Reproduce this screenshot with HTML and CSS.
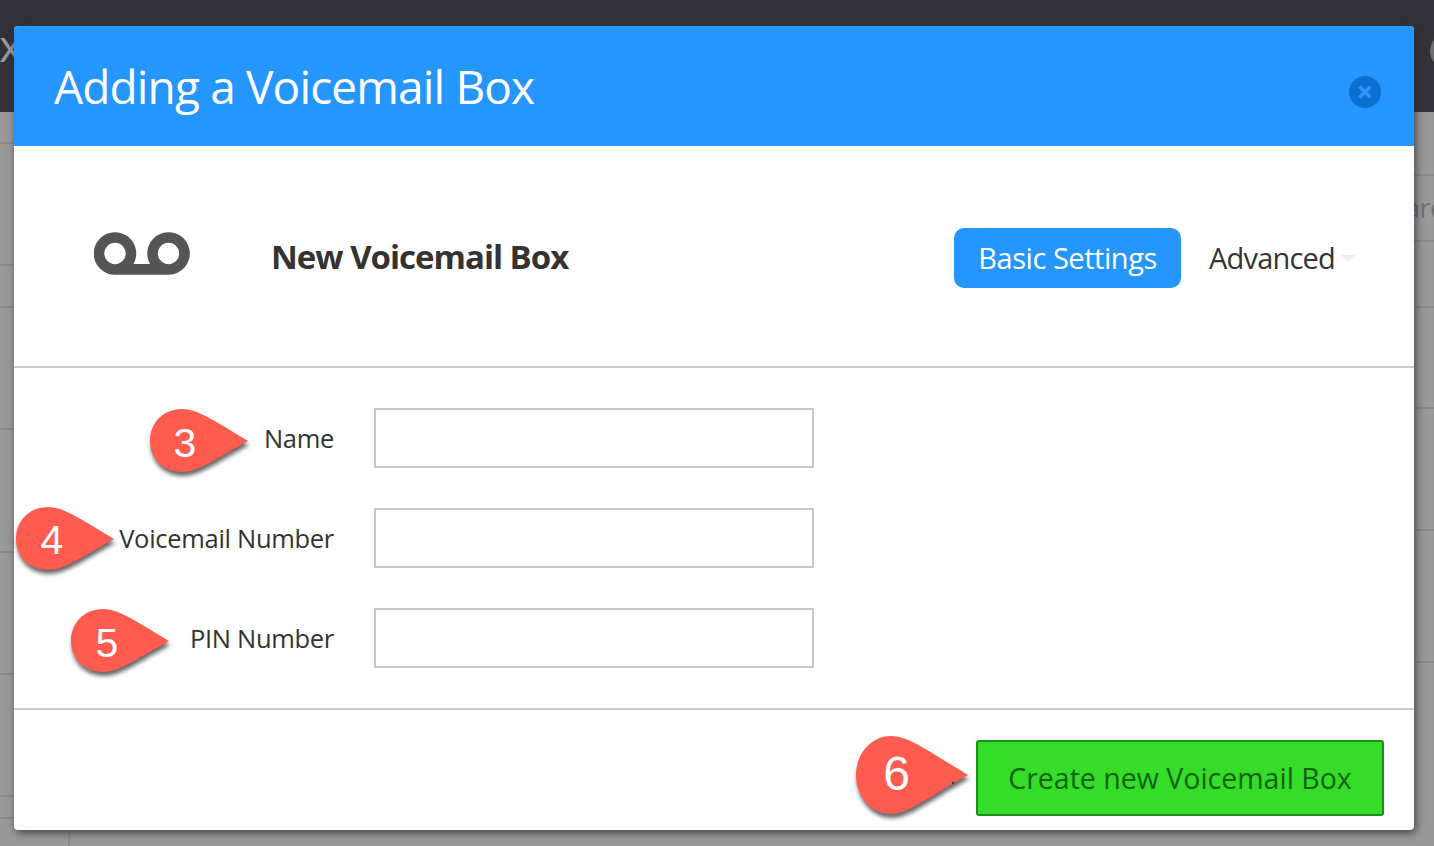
FILE: index.html
```html
<!DOCTYPE html>
<html lang="en">
<head>
<meta charset="utf-8">
<title>Adding a Voicemail Box</title>
<link rel="stylesheet" href="styles.css">
</head>
<body>
<div class="backdrop">
  <div class="topbar"><span class="bg-x">x</span><span class="bg-avatar"></span></div>
  <div class="bg-table">
    <div class="bg-col bg-col-left">
      <div class="bg-row"></div><div class="bg-row"></div><div class="bg-row"></div><div class="bg-row"></div>
      <div class="bg-row"></div><div class="bg-row"></div><div class="bg-row"></div><div class="bg-row"></div>
      <div class="bg-rest"></div>
    </div>
    <div class="bg-col bg-col-right">
      <div class="bg-row"></div><div class="bg-row"><span class="bg-text">are</span></div><div class="bg-row"></div><div class="bg-row"></div>
      <div class="bg-row"></div><div class="bg-row"></div>
      <div class="bg-rest"></div>
    </div>
  </div>
</div>

<section class="modal">
  <header class="modal-head">
    <h1 class="modal-title">Adding a Voicemail Box</h1>
    <span class="close-btn">
      <svg viewBox="0 0 16 16" width="16" height="16"><path d="M2.500 2.500l11 11M13.500 2.500l-11 11" stroke="#2b96ff" stroke-width="3.6" fill="none"/></svg>
    </span>
  </header>

  <div class="summary">
    <svg class="vm-icon" viewBox="0 0 96 44" width="96" height="44">
      <path fill="#555" fill-rule="evenodd" d="M21 .2A21.300 21.300 0 0 1 39.500 32H56A21.300 21.300 0 1 1 74.500 42.800H21A21.300 21.300 0 0 1 21 .2ZM21 10.800a10.700 10.700 0 1 0 0 21.400a10.700 10.700 0 0 0 0-21.400ZM74.500 10.800a10.700 10.700 0 1 0 0 21.400a10.700 10.700 0 0 0 0-21.400Z"/>
    </svg>
    <h2 class="summary-title">New Voicemail Box</h2>
    <nav class="tabs">
      <span class="tab tab-active">Basic Settings</span>
      <span class="tab tab-plain">Advanced<i class="caret"></i></span>
    </nav>
  </div>

  <form class="fields">
    <div class="field"><label class="field-label">Name</label><span class="input"></span></div>
    <div class="field"><label class="field-label">Voicemail Number</label><span class="input"></span></div>
    <div class="field"><label class="field-label">PIN Number</label><span class="input"></span></div>
  </form>

  <footer class="modal-foot">
    <span class="create-btn">Create new Voicemail Box</span>
  </footer>
</section>

<svg class="pin pin-3" viewBox="0 0 104 70" width="104" height="70"><path class="pin-shape" d="M33 0C50 0 70 15 99 32C70 48 50 63 33 63C14 63 1 49 1 32C1 14 14 0 33 0Z"/><text x="36" y="48" class="pin-num">3</text></svg>
<svg class="pin pin-4" viewBox="0 0 104 70" width="104" height="70"><path class="pin-shape" d="M33 0C50 0 70 15 99 32C70 48 50 63 33 63C14 63 1 49 1 32C1 14 14 0 33 0Z"/><text x="37" y="47" class="pin-num">4</text></svg>
<svg class="pin pin-5" viewBox="0 0 104 70" width="104" height="70"><path class="pin-shape" d="M33 0C50 0 70 15 99 32C70 48 50 63 33 63C14 63 1 49 1 32C1 14 14 0 33 0Z"/><text x="37" y="48" class="pin-num">5</text></svg>
<svg class="pin pin-6" viewBox="0 0 120 84" width="120" height="84"><path class="pin-shape" d="M36 1C54 1 76 18 113 40C76 60 54 79 36 79C16 79 1 61 1 40C1 19 16 1 36 1Z"/><circle cx="98" cy="48" r="1.300" class="pin-dot"/><text x="41.500" y="55" class="pin-num pin-num-lg">6</text></svg>
</body>
</html>
```
FILE: styles.css
```css
* { box-sizing: border-box; }
html, body { margin: 0; padding: 0; height: 100%; overflow: hidden; }
body { width: 1434px; height: 846px; position: relative; background: #999; font-family: "Open Sans", "Noto Sans", sans-serif; color: #333; }

.backdrop { position: absolute; inset: 0; background: #999; display: flex; flex-direction: column; overflow: hidden; }
.topbar { height: 112px; flex: none; background: #333238; position: relative; }
.bg-x { position: absolute; left: -1px; top: 15px; font-size: 44px; line-height: 60px; color: #999; }
.bg-avatar { position: absolute; left: 1430px; top: 32px; width: 40px; height: 38px; border-radius: 50%; background: #6e6e70; }
.bg-table { flex: 1; display: flex; justify-content: space-between; }
.bg-col { display: flex; flex-direction: column; }
.bg-col-left { width: 70px; }
.bg-col-right { width: 60px; }
.bg-row { flex: none; border-bottom: 2px solid #8a8a8a; position: relative; }
.bg-col-left .bg-row:nth-child(1) { height: 32px; }
.bg-col-left .bg-row:nth-child(2) { height: 122px; }
.bg-col-left .bg-row:nth-child(3) { height: 42px; }
.bg-col-left .bg-row:nth-child(4) { height: 122px; }
.bg-col-left .bg-row:nth-child(5) { height: 123px; }
.bg-col-left .bg-row:nth-child(6) { height: 122px; }
.bg-col-left .bg-row:nth-child(7) { height: 122px; }
.bg-col-left .bg-row:nth-child(8) { height: 22px; }
.bg-col-right .bg-row:nth-child(1) { height: 64px; }
.bg-col-right .bg-row:nth-child(2) { height: 66px; }
.bg-col-right .bg-row:nth-child(3) { height: 66px; }
.bg-col-right .bg-row:nth-child(4) { height: 101px; }
.bg-col-right .bg-row:nth-child(5) { height: 122px; }
.bg-col-right .bg-row:nth-child(6) { height: 132px; }
.bg-rest { flex: 1; }
.bg-col-left .bg-rest { border-right: 2px solid #8a8a8a; }
.bg-text { position: absolute; left: 31px; top: 14px; font-size: 27px; line-height: 36px; letter-spacing: -.5px; color: #707070; white-space: nowrap; }

.modal { position: absolute; left: 14px; top: 26px; width: 1400px; height: 804px; background: #fff; border-radius: 4px; box-shadow: 2px 3px 9px rgba(40,40,55,.75); display: flex; flex-direction: column; overflow: hidden; }
.modal-head { height: 120px; flex: none; background: #2696ff; display: flex; align-items: center; justify-content: space-between; padding: 0 33px 0 40px; }
.modal-title { margin: 0; font-size: 46px; font-weight: 400; letter-spacing: -.85px; color: #fff; line-height: 1; white-space: nowrap; }
.close-btn { width: 32px; height: 32px; border-radius: 50%; background: #0b6fce; display: flex; align-items: center; justify-content: center; margin-top: 12px; }

.summary { height: 222px; flex: none; border-bottom: 2px solid #ccc; display: flex; align-items: center; padding: 0 59px 0 80px; }
.vm-icon { flex: none; margin-right: 81px; margin-top: -4px; }
.summary-title { margin: 0; flex: 1; font-size: 33px; font-weight: 700; letter-spacing: -1px; color: #333; white-space: nowrap; }
.tabs { display: flex; align-items: center; margin-top: 3px; }
.tab { height: 60px; font-size: 29px; display: flex; align-items: center; color: #333; white-space: nowrap; border-radius: 10px; }
.tab-active { background: #2696ff; color: #fff; width: 227px; justify-content: center; letter-spacing: -.45px; }
.tab-plain { margin-left: 28px; letter-spacing: -.8px; }
.caret { display: inline-block; margin-left: 6px; margin-top: 2px; border-left: 7px solid transparent; border-right: 7px solid transparent; border-top: 7px solid #eee; }

.fields { height: 342px; flex: none; border-bottom: 2px solid #ccc; padding-top: 40px; display: flex; flex-direction: column; gap: 40px; }
.field { display: flex; align-items: center; height: 60px; }
.field-label { width: 320px; text-align: right; font-size: 25.500px; letter-spacing: -.3px; color: #333; white-space: nowrap; }
.input { margin-left: 40px; width: 440px; height: 60px; border: 2px solid #c6c6cf; background: #fff; }

.modal-foot { flex: 1; display: flex; align-items: flex-start; justify-content: flex-end; padding: 30px 30px 0 0; }
.create-btn { width: 408px; height: 76px; background: #33dd28; border: 2px solid #1f8f1c; border-radius: 3px; display: flex; align-items: center; justify-content: center; font-size: 28.500px; color: #14620f; white-space: nowrap; }

.pin { position: absolute; overflow: visible; }
.pin-3 { left: 149px; top: 409px; }
.pin-4 { left: 15px; top: 507px; }
.pin-5 { left: 70px; top: 609px; }
.pin-6 { left: 855px; top: 735px; }
.pin-shape { fill: #ff5b4e; filter: drop-shadow(1px 4px 2px rgba(0,0,0,.6)); }
.pin-dot { fill: #1a4a80; }
.pin-num { fill: #fff; font-family: "Liberation Sans", Arial, sans-serif; font-size: 41px; text-anchor: middle; }
.pin-num-lg { font-size: 48px; }
```
